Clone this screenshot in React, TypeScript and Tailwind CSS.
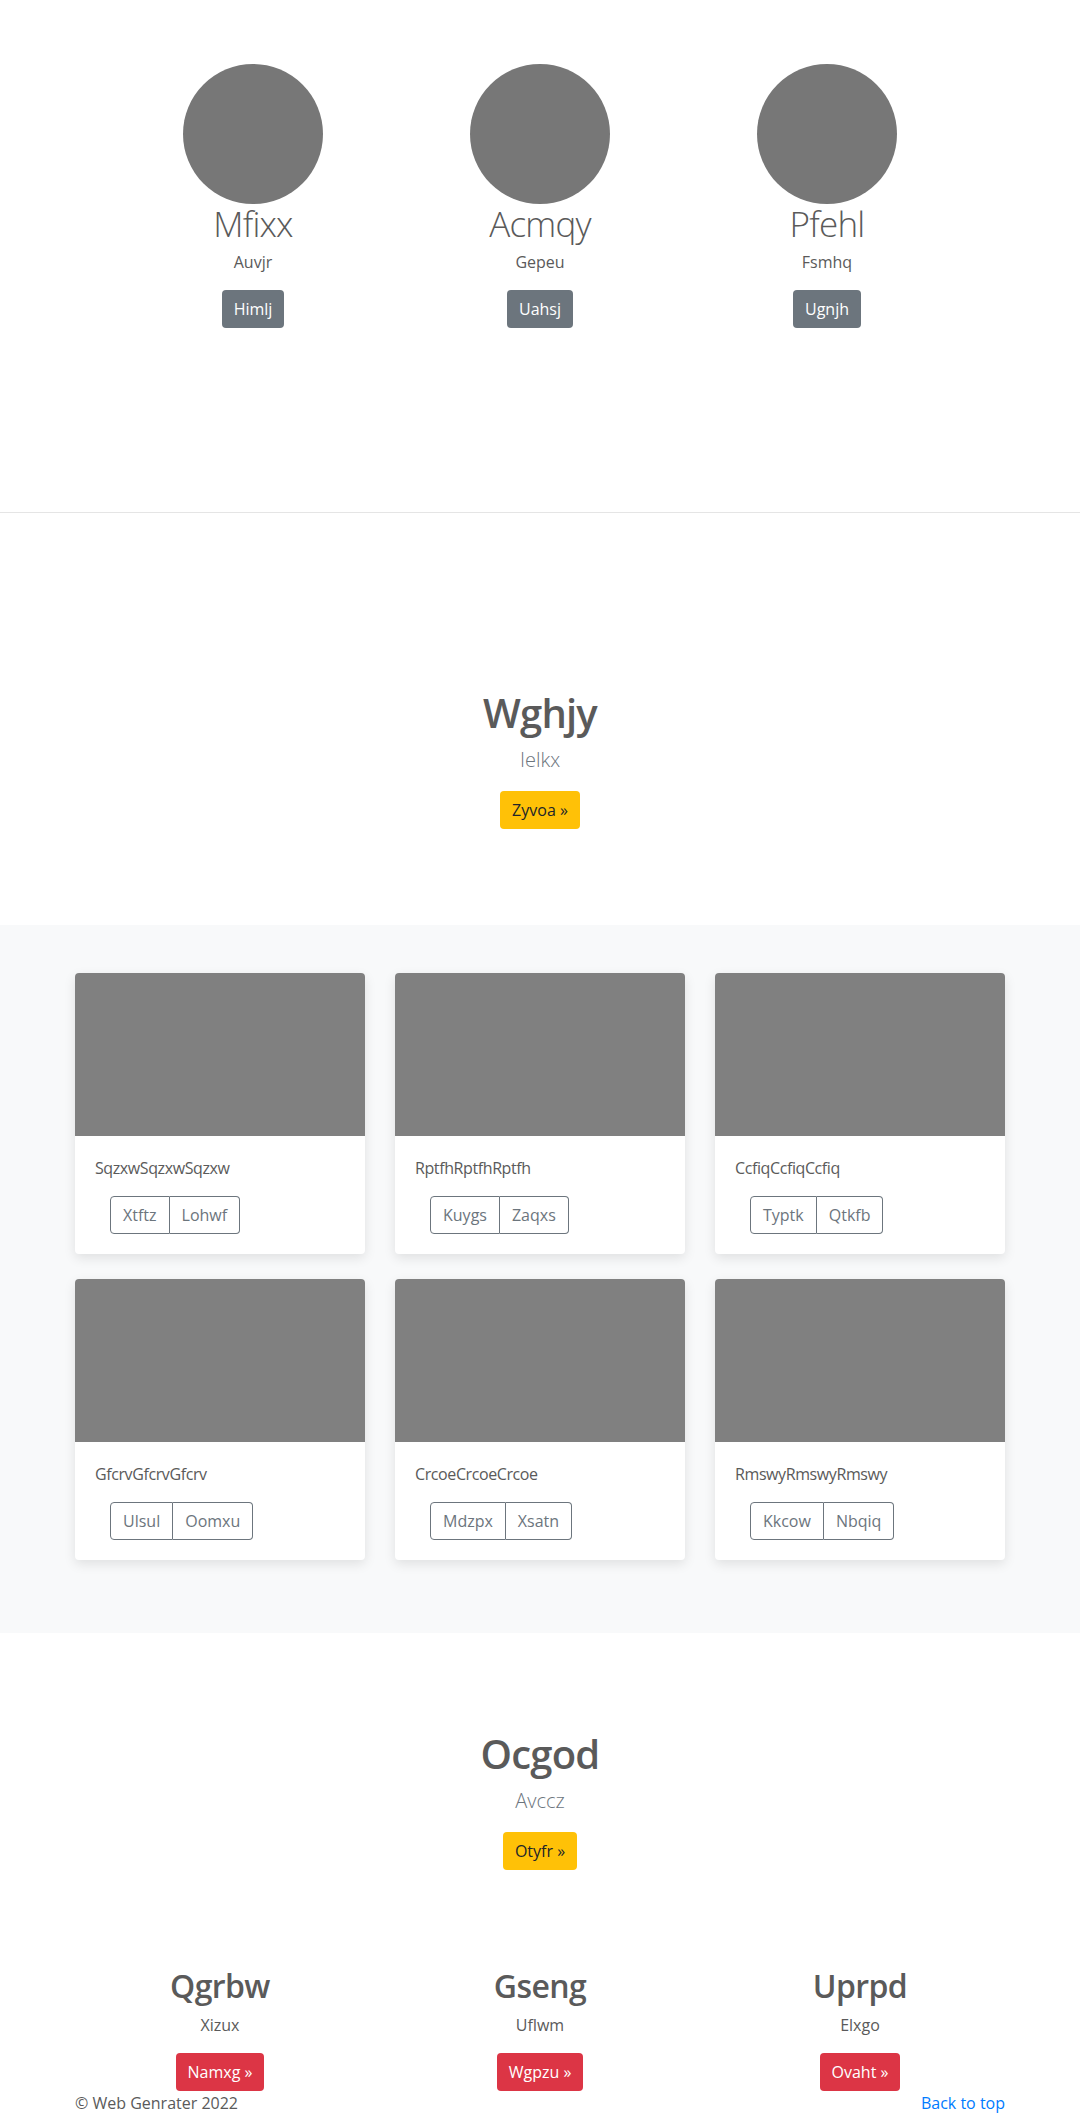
const people = [
  { name: "Mfixx", sub: "Auvjr", btn: "Himlj" },
  { name: "Acmqy", sub: "Gepeu", btn: "Uahsj" },
  { name: "Pfehl", sub: "Fsmhq", btn: "Ugnjh" },
];

const cards = [
  { text: "SqzxwSqzxwSqzxw", a: "Xtftz", b: "Lohwf" },
  { text: "RptfhRptfhRptfh", a: "Kuygs", b: "Zaqxs" },
  { text: "CcfiqCcfiqCcfiq", a: "Typtk", b: "Qtkfb" },
  { text: "GfcrvGfcrvGfcrv", a: "Ulsul", b: "Oomxu" },
  { text: "CrcoeCrcoeCrcoe", a: "Mdzpx", b: "Xsatn" },
  { text: "RmswyRmswyRmswy", a: "Kkcow", b: "Nbqiq" },
];

const features = [
  { title: "Qgrbw", sub: "Xizux", btn: "Namxg »" },
  { title: "Gseng", sub: "Uflwm", btn: "Wgpzu »" },
  { title: "Uprpd", sub: "Elxgo", btn: "Ovaht »" },
];

function Hero({ title, lead, action }: { title: string; lead: string; action: string }) {
  return (
    <div className="flex flex-col items-center text-center">
      <h1 className="text-[40px] leading-[48px] font-semibold tracking-[-0.8px] text-[#5a5a5a]">{title}</h1>
      <p className="mt-2 text-[20px] leading-[30px] font-light text-[#6c757d]">{lead}</p>
      <button className="mt-4 h-[38px] px-3 rounded bg-[#ffc107] text-[16px] text-[#212529]">
        {action}
      </button>
    </div>
  );
}

export default function App() {
  return (
    <div className="min-h-[2114px] bg-white text-[#5a5a5a] font-['Open_Sans',sans-serif]">
      {/* team */}
      <section className="pt-[64px] pb-[184px] border-b border-[#e5e5e5]">
        <div className="w-[861px] mx-auto grid grid-cols-3">
          {people.map((p) => (
            <div key={p.name} className="flex flex-col items-center text-center">
              <div className="w-[140px] h-[140px] rounded-full bg-[#777777]" />
              <h2 className="text-[35px] leading-[40px] font-light tracking-[-0.8px]">{p.name}</h2>
              <p className="mt-[6px] text-[16px] leading-6">{p.sub}</p>
              <button className="mt-4 h-[38px] px-3 rounded bg-[#6c757d] text-white text-[16px]">
                {p.btn}
              </button>
            </div>
          ))}
        </div>
      </section>

      <section className="pt-[176px] pb-[96px]">
        <Hero title="Wghjy" lead="Ielkx" action="Zyvoa »" />
      </section>

      {/* album */}
      <section className="bg-[#f8f9fa] pt-[48px] pb-[73px]">
        <div className="w-[960px] mx-auto grid grid-cols-3 gap-y-[25px]">
          {cards.map((c) => (
            <div key={c.text} className="px-[15px]">
              <div className="bg-white rounded overflow-hidden shadow-[0_4px_12px_rgba(0,0,0,0.1)]">
                <div className="h-[163px] bg-[#808080]" />
                <div className="p-5">
                  <p className="text-[16px] leading-6 tracking-[-0.4px]">{c.text}</p>
                  <div className="mt-4 ml-[15px] inline-flex text-[16px] text-[#6c757d]">
                    <button className="h-[38px] px-3 border border-[#6c757d] rounded-l">{c.a}</button>
                    <button className="h-[38px] px-3 border border-l-0 border-[#6c757d] rounded-r">{c.b}</button>
                  </div>
                </div>
              </div>
            </div>
          ))}
        </div>
      </section>

      <section className="pt-[97px]">
        <Hero title="Ocgod" lead="Avccz" action="Otyfr »" />
      </section>

      <section className="pt-[97px]">
        <div className="w-[960px] mx-auto grid grid-cols-3">
          {features.map((f) => (
            <div key={f.title} className="flex flex-col items-center text-center">
              <h2 className="text-[32px] leading-[38px] font-semibold tracking-[-0.6px]">{f.title}</h2>
              <p className="mt-2 text-[16px] leading-6">{f.sub}</p>
              <button className="mt-4 h-[38px] px-3 rounded bg-[#dc3545] text-white text-[16px]">
                {f.btn}
              </button>
            </div>
          ))}
        </div>
      </section>

      <footer className="w-[960px] mx-auto px-[15px] flex justify-between text-[16px] leading-6">
        <p>© Web Genrater 2022</p>
        <a href="#" className="text-[#007bff]">Back to top</a>
      </footer>
    </div>
  );
}
